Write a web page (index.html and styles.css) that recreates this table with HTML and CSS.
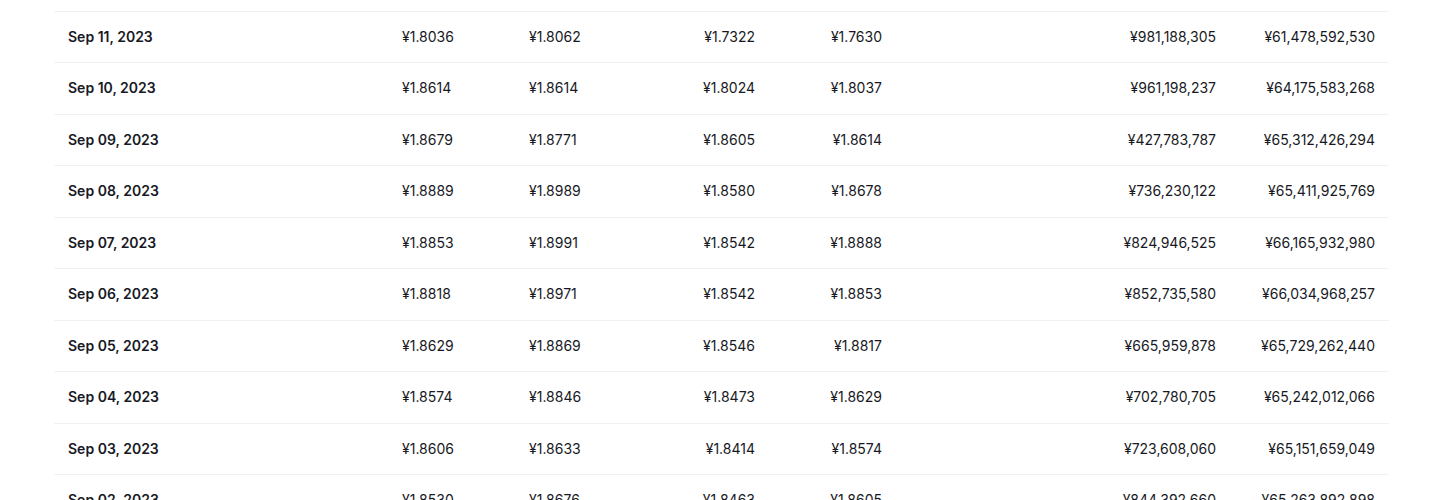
FILE: index.html
```html
<!DOCTYPE html>
<html lang="en">
<head>
<meta charset="utf-8">
<title>Historical Data</title>
<link rel="stylesheet" href="styles.css">
</head>
<body>
<div class="table">
  <div class="row"><div class="c date">Sep 11, 2023</div><div class="c l">¥1.8036</div><div class="c l">¥1.8062</div><div class="c r">¥1.7322</div><div class="c r">¥1.7630</div><div class="c r">¥981,188,305</div><div class="c r">¥61,478,592,530</div></div>
  <div class="row"><div class="c date">Sep 10, 2023</div><div class="c l">¥1.8614</div><div class="c l">¥1.8614</div><div class="c r">¥1.8024</div><div class="c r">¥1.8037</div><div class="c r">¥961,198,237</div><div class="c r">¥64,175,583,268</div></div>
  <div class="row"><div class="c date">Sep 09, 2023</div><div class="c l">¥1.8679</div><div class="c l">¥1.8771</div><div class="c r">¥1.8605</div><div class="c r">¥1.8614</div><div class="c r">¥427,783,787</div><div class="c r">¥65,312,426,294</div></div>
  <div class="row"><div class="c date">Sep 08, 2023</div><div class="c l">¥1.8889</div><div class="c l">¥1.8989</div><div class="c r">¥1.8580</div><div class="c r">¥1.8678</div><div class="c r">¥736,230,122</div><div class="c r">¥65,411,925,769</div></div>
  <div class="row"><div class="c date">Sep 07, 2023</div><div class="c l">¥1.8853</div><div class="c l">¥1.8991</div><div class="c r">¥1.8542</div><div class="c r">¥1.8888</div><div class="c r">¥824,946,525</div><div class="c r">¥66,165,932,980</div></div>
  <div class="row"><div class="c date">Sep 06, 2023</div><div class="c l">¥1.8818</div><div class="c l">¥1.8971</div><div class="c r">¥1.8542</div><div class="c r">¥1.8853</div><div class="c r">¥852,735,580</div><div class="c r">¥66,034,968,257</div></div>
  <div class="row"><div class="c date">Sep 05, 2023</div><div class="c l">¥1.8629</div><div class="c l">¥1.8869</div><div class="c r">¥1.8546</div><div class="c r">¥1.8817</div><div class="c r">¥665,959,878</div><div class="c r">¥65,729,262,440</div></div>
  <div class="row"><div class="c date">Sep 04, 2023</div><div class="c l">¥1.8574</div><div class="c l">¥1.8846</div><div class="c r">¥1.8473</div><div class="c r">¥1.8629</div><div class="c r">¥702,780,705</div><div class="c r">¥65,242,012,066</div></div>
  <div class="row"><div class="c date">Sep 03, 2023</div><div class="c l">¥1.8606</div><div class="c l">¥1.8633</div><div class="c r">¥1.8414</div><div class="c r">¥1.8574</div><div class="c r">¥723,608,060</div><div class="c r">¥65,151,659,049</div></div>
  <div class="row"><div class="c date">Sep 02, 2023</div><div class="c l">¥1.8530</div><div class="c l">¥1.8676</div><div class="c r">¥1.8463</div><div class="c r">¥1.8605</div><div class="c r">¥844,392,660</div><div class="c r">¥65,263,892,898</div></div>
</div>
</body>
</html>
```

FILE: styles.css
```css
html, body {
  margin: 0;
  padding: 0;
  background: #ffffff;
}

body {
  font-family: Inter, "Noto Sans", sans-serif;
  font-size: 14px;
  color: #171924;
  overflow: hidden;
}

.table {
  margin: 10.5px 0 0 54px;
  width: 1335px;
  border-top: 1px solid #eff2f5;
}

.row {
  display: grid;
  grid-template-columns: 334px 127px 127px 127px 127px 334px 159px;
  align-items: center;
  height: 51.5px;
  box-sizing: border-box;
  border-bottom: 1px solid #eff2f5;
}

.c {
  padding: 0 14px;
  line-height: 20px;
  white-space: nowrap;
}

.date {
  font-weight: 600;
  text-align: left;
}

.l {
  text-align: left;
}

.r {
  text-align: right;
}
```
